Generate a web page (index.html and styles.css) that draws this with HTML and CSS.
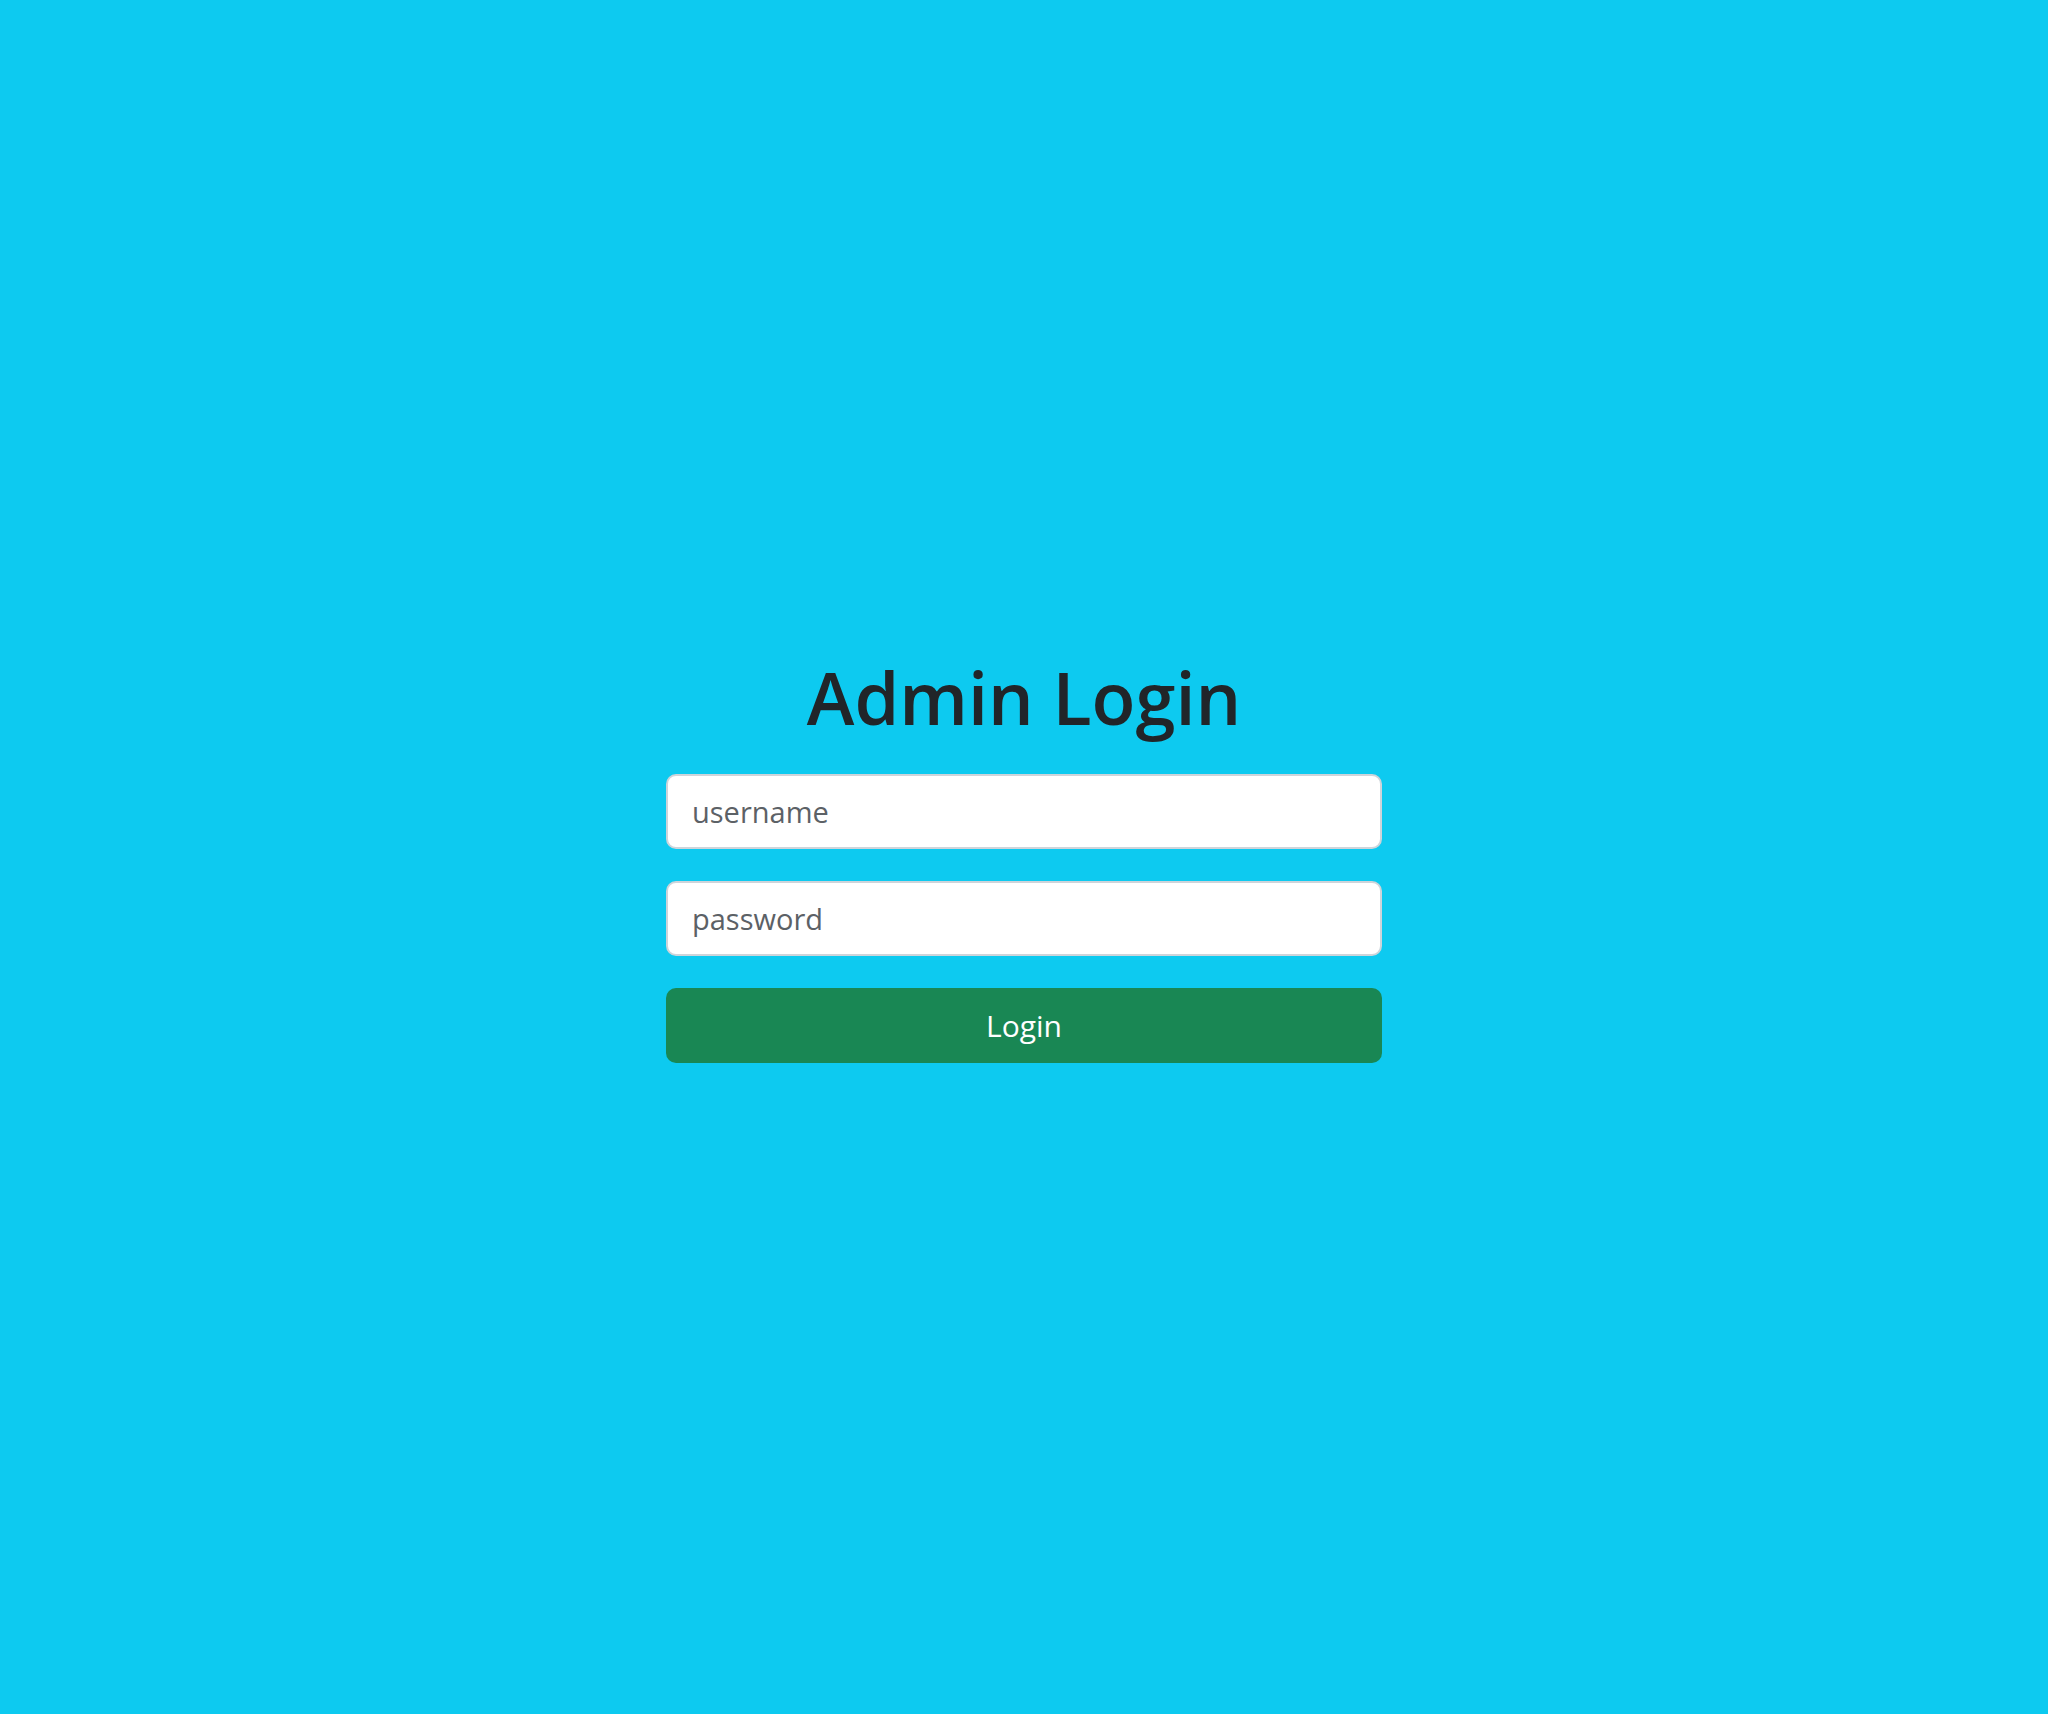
FILE: index.html
```html
<!DOCTYPE html>
<html lang="en">
<head>
<meta charset="utf-8">
<title>Admin Login</title>
<link rel="stylesheet" href="styles.css">
</head>
<body>
<main class="page">
  <form class="login">
    <h1 class="title">Admin Login</h1>
    <input class="field" type="text" placeholder="username">
    <input class="field" type="password" placeholder="password">
    <button class="btn" type="button">Login</button>
  </form>
</main>
</body>
</html>
```

FILE: styles.css
```css
html, body {
  margin: 0;
  padding: 0;
}
body {
  background: #0dcaf0;
  font-family: "Open Sans", "Noto Sans", sans-serif;
  color: #212529;
}
.page {
  box-sizing: border-box;
  min-height: 100vh;
  padding-top: 3px;
  display: flex;
  align-items: center;
  justify-content: center;
}
.login {
  width: 716px;
  display: flex;
  flex-direction: column;
  gap: 32px;
}
.title {
  margin: 0 0 2px;
  font-size: 72px;
  font-weight: 600;
  line-height: 1.2;
  text-align: center;
  color: #212529;
}
.field {
  box-sizing: border-box;
  height: 75px;
  width: 100%;
  margin: 0;
  padding: 0 24px;
  border: 2px solid #ced4da;
  border-radius: 10px;
  background: #fff;
  font-family: inherit;
  font-size: 29px;
  color: #212529;
  outline: none;
}
.field::placeholder {
  color: #5c6166;
  opacity: 1;
}
.btn {
  box-sizing: border-box;
  height: 75px;
  width: 100%;
  border: 0;
  border-radius: 10px;
  background: #198754;
  color: #fff;
  font-family: inherit;
  font-size: 30px;
  cursor: pointer;
}
```
